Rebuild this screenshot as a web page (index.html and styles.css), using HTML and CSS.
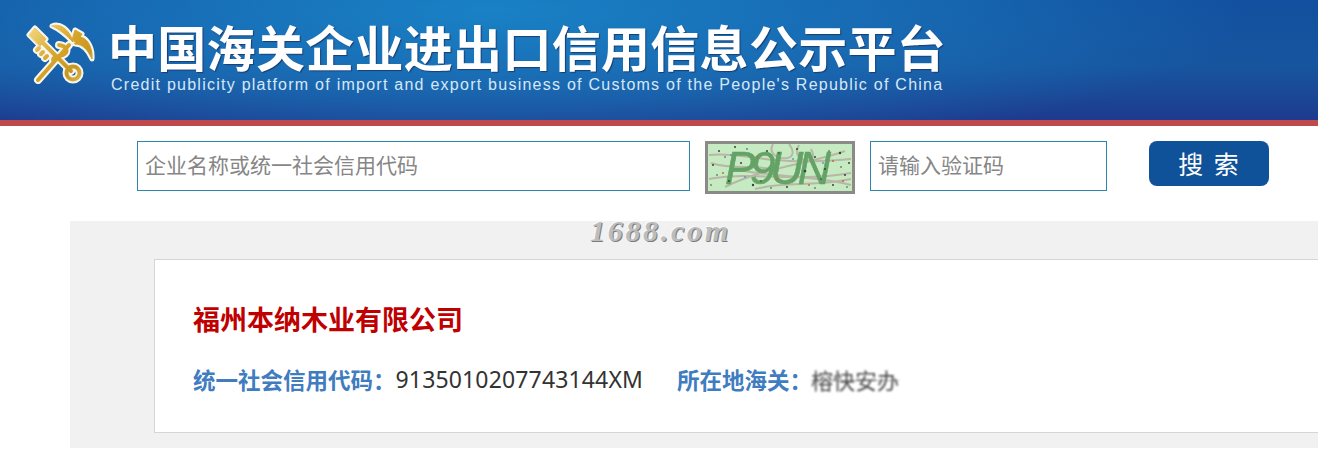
FILE: index.html
```html
<!DOCTYPE html>
<html lang="zh-CN">
<head>
<meta charset="utf-8">
<title>中国海关企业进出口信用信息公示平台</title>
<link rel="stylesheet" href="styles.css">
</head>
<body>
<header class="banner">
  <svg class="emblem" width="70" height="72" viewBox="0 0 70 72" aria-hidden="true">
    <defs>
      <linearGradient id="gold" gradientUnits="userSpaceOnUse" x1="0" y1="0" x2="70" y2="72">
        <stop offset="0" stop-color="#f8e69a"/>
        <stop offset="0.45" stop-color="#d8a62c"/>
        <stop offset="0.7" stop-color="#c8961f"/>
        <stop offset="1" stop-color="#f6dc78"/>
      </linearGradient>
    </defs>
    <g class="emblem-halo">
      <path d="M13 62 L44 27"/>
      <path d="M12 19 L46 53"/>
      <circle cx="48" cy="55" r="6.5"/>
      <path class="solid" d="M4 17 L10 10 L21 21 L15 28Z"/>
      <path d="M14 30 l-2 2 M18 34 l-2 2 M22 38 l-2 2"/>
      <path class="solid" d="M27 8 C34 5 44 10 48 24 C42 18 36 12 27 8Z"/>
      <path class="solid" d="M52 20 C60 16 68 28 67 41 C63 32 58 26 50 26Z"/>
      <path class="solid" d="M47 22 L50 12 L57 16 L52 24Z"/>
      <path d="M34 27 C42 28 44 34 38 37 C33 39 28 38 28 42"/>
    </g>
    <g class="emblem-metal">
      <path d="M13 62 L44 27"/>
      <path d="M12 19 L46 53"/>
      <circle cx="48" cy="55" r="6.5"/>
      <path class="solid" d="M4 17 L10 10 L21 21 L15 28Z"/>
      <path d="M14 30 l-2 2 M18 34 l-2 2 M22 38 l-2 2"/>
      <path class="solid" d="M27 8 C34 5 44 10 48 24 C42 18 36 12 27 8Z"/>
      <path class="solid" d="M52 20 C60 16 68 28 67 41 C63 32 58 26 50 26Z"/>
      <path class="solid" d="M47 22 L50 12 L57 16 L52 24Z"/>
      <path d="M34 27 C42 28 44 34 38 37 C33 39 28 38 28 42"/>
    </g>
  </svg>
  <div class="brand">
    <h1 class="brand-title">中国海关企业进出口信用信息公示平台</h1>
    <p class="brand-sub">Credit publicity platform of import and export business of Customs of the People's Republic of China</p>
  </div>
</header>

<form class="search">
  <input class="field field-name" type="text" placeholder="企业名称或统一社会信用代码">
  <svg class="captcha" width="150" height="53" viewBox="0 0 150 53" aria-label="验证码">
    <rect x="1.5" y="1.5" width="147" height="50" fill="#c6eac2" stroke="#8a8a86" stroke-width="3"/>
    <g class="captcha-noise">
      <path d="M4 14 C40 10 60 26 146 18"/>
      <path d="M4 38 C40 30 90 42 146 32"/>
      <path d="M20 46 C60 26 100 24 140 10"/>
      <path d="M68 3 C58 20 100 24 84 3"/>
      <path d="M94 4 C84 22 116 26 106 8"/>
      <path d="M30 28 C60 36 110 34 146 44"/>
      <path d="M6 22 C30 30 50 22 74 30"/>
      <path d="M50 48 C80 40 110 46 146 38"/>
    </g>
    <text class="captcha-text" x="20" y="43" textLength="106" lengthAdjust="spacing">P9UN</text>
    <g fill="#3d3d3d">
      <circle cx="14" cy="10" r="1"/><circle cx="30" cy="6" r="1"/><circle cx="8" cy="24" r="1"/><circle cx="24" cy="40" r="1"/>
      <circle cx="48" cy="44" r="1.2"/><circle cx="62" cy="10" r="1"/><circle cx="92" cy="8" r="1"/><circle cx="110" cy="16" r="1"/>
      <circle cx="120" cy="28" r="1"/><circle cx="135" cy="12" r="1.2"/><circle cx="140" cy="34" r="1"/><circle cx="128" cy="44" r="1"/>
      <circle cx="100" cy="30" r="1.3"/><circle cx="82" cy="46" r="1"/><circle cx="36" cy="22" r="1"/><circle cx="144" cy="22" r="1"/>
      <circle cx="20" cy="16" r=".8"/><circle cx="12" cy="34" r=".8"/><circle cx="42" cy="8" r=".8"/><circle cx="56" cy="40" r=".8"/>
      <circle cx="74" cy="12" r=".8"/><circle cx="116" cy="38" r=".8"/><circle cx="124" cy="10" r=".8"/><circle cx="136" cy="26" r=".8"/>
      <circle cx="66" cy="47" r=".8"/><circle cx="110" cy="47" r=".8"/><circle cx="6" cy="44" r=".8"/><circle cx="142" cy="46" r=".8"/>
    </g>
    <g fill="#c9683c">
      <circle cx="52" cy="16" r="1"/><circle cx="104" cy="44" r="1"/><circle cx="128" cy="20" r="1"/><circle cx="18" cy="32" r="1"/>
      <circle cx="72" cy="38" r="1"/><circle cx="138" cy="40" r="1"/>
    </g>
    <g fill="#5b8fd0">
      <circle cx="26" cy="14" r=".9"/><circle cx="118" cy="22" r=".9"/><circle cx="88" cy="18" r=".9"/><circle cx="40" cy="36" r=".9"/>
    </g>
  </svg>
  <input class="field field-code" type="text" placeholder="请输入验证码">
  <button class="search-btn" type="button">搜 索</button>
</form>

<main class="panel">
  <div class="watermark">1688.com</div>
  <section class="card">
    <h2 class="company">福州本纳木业有限公司</h2>
    <div class="facts">
      <span class="fact-label">统一社会信用代码：</span><span class="fact-value">9135010207743144XM</span>
      <span class="fact-label fact-gap">所在地海关：</span><span class="fact-blur">榕快安办</span>
    </div>
  </section>
</main>
</body>
</html>
```

FILE: styles.css
```css
* { box-sizing: border-box; }
html, body { margin: 0; padding: 0; overflow: hidden; background: #fff; }
body {
  width: 1318px;
  height: 459px;
  font-family: "Noto Sans", "Noto Sans CJK SC", sans-serif;
  color: #333;
}

.banner {
  height: 126px;
  display: flex;
  align-items: flex-start;
  padding: 18px 0 0 25px;
  border-bottom: 6px solid #bf4a4e;
  background:
    radial-gradient(ellipse 760px 150px at 490px 10px, rgba(26, 132, 200, .95) 0%, rgba(26, 120, 190, .6) 55%, rgba(20, 90, 165, 0) 100%),
    linear-gradient(180deg, #12509f 0%, #17559f 55%, #1e3b8e 100%);
}
.emblem { flex: none; display: block; filter: blur(.35px); }
.emblem-halo { fill: none; stroke: #f6f6ee; stroke-width: 8; stroke-linecap: round; stroke-linejoin: round; }
.emblem-metal { fill: none; stroke: url(#gold); stroke-width: 4; stroke-linecap: round; stroke-linejoin: round; }
.emblem-halo .solid { fill: #f6f6ee; stroke-width: 5; }
.emblem-metal .solid { fill: url(#gold); stroke-width: 1; }

.brand { margin-left: 16px; margin-top: 2px; }
.brand-title {
  margin: 0 0 0 -3px;
  font-family: "Noto Sans CJK SC", sans-serif;
  font-size: 49px;
  line-height: 52px;
  font-weight: 700;
  letter-spacing: .3px;
  color: #fff;
  white-space: nowrap;
  text-shadow: 1px 1px 1px #1b3d70;
}
.brand-sub {
  margin: 4px 0 0;
  font-family: "Liberation Sans", sans-serif;
  font-size: 16px;
  line-height: 18px;
  letter-spacing: 1.25px;
  color: #d6e8f8;
  white-space: nowrap;
}

.search {
  display: flex;
  align-items: flex-start;
  height: 95px;
  padding: 15px 0 0 137px;
}
.field {
  height: 50px;
  padding: 0 7px 4px;
  border: 1px solid #2f86ad;
  border-radius: 0;
  outline: none;
  font-family: "Noto Sans CJK SC", sans-serif;
  font-size: 21px;
  background: #fff;
}
.field::placeholder { color: #868686; opacity: 1; }
.field-name { width: 553px; }
.field-code { width: 237px; }
.captcha { flex: none; display: block; margin: 0 15px; filter: blur(.3px); }
.captcha-noise { fill: none; stroke: #b3a79d; stroke-width: 2; opacity: .75; }
.captcha-text {
  font-family: "Liberation Sans", sans-serif;
  font-size: 46px;
  font-style: italic;
  fill: #63a366;
  stroke: #63a366;
  stroke-width: .6;
}
.search-btn {
  width: 120px;
  height: 45px;
  margin-left: 42px;
  border: 0;
  border-radius: 8px;
  background: #0f5299;
  color: #fff;
  font-family: "Noto Sans CJK SC", sans-serif;
  font-size: 25px;
  letter-spacing: 1px;
  word-spacing: 3px;
  padding: 0 0 2px;
}

.panel {
  position: relative;
  width: 1300px;
  height: 227px;
  margin-left: 70px;
  padding: 38px 0 0 84px;
  background: #f1f1f1;
}
.watermark {
  position: absolute;
  left: 520px;
  top: -6px;
  font-family: "Liberation Serif", serif;
  font-size: 30px;
  font-style: italic;
  font-weight: 700;
  letter-spacing: 2.7px;
  line-height: 32px;
  color: #bdbdbd;
  text-shadow: 1px 1px 0 #7d7d7d, -1px -1px 0 #f8f8f8;
}
.card {
  width: 1200px;
  height: 174px;
  padding: 40px 0 0 38px;
  border: 1px solid #d6d6d6;
  background: #fff;
}
.company {
  margin: 0;
  font-family: "Noto Sans CJK SC", sans-serif;
  font-size: 27px;
  line-height: 38px;
  font-weight: 700;
  color: #c00000;
}
.facts {
  display: flex;
  align-items: center;
  margin-top: 24px;
  height: 34px;
  font-family: "Noto Sans CJK SC", sans-serif;
  font-size: 22.5px;
  white-space: nowrap;
}
.fact-label { font-weight: 700; color: #3f7cc0; }
.fact-value { font-family: "Noto Sans", sans-serif; font-size: 23px; letter-spacing: .15px; color: #333; }
.fact-gap { margin-left: 34px; }
.fact-blur {
  font-size: 22px;
  color: #4a4a4a;
  filter: blur(.8px);
  margin-left: -1px;
  text-decoration: line-through rgba(90, 90, 90, .55) 1px;
}
```
